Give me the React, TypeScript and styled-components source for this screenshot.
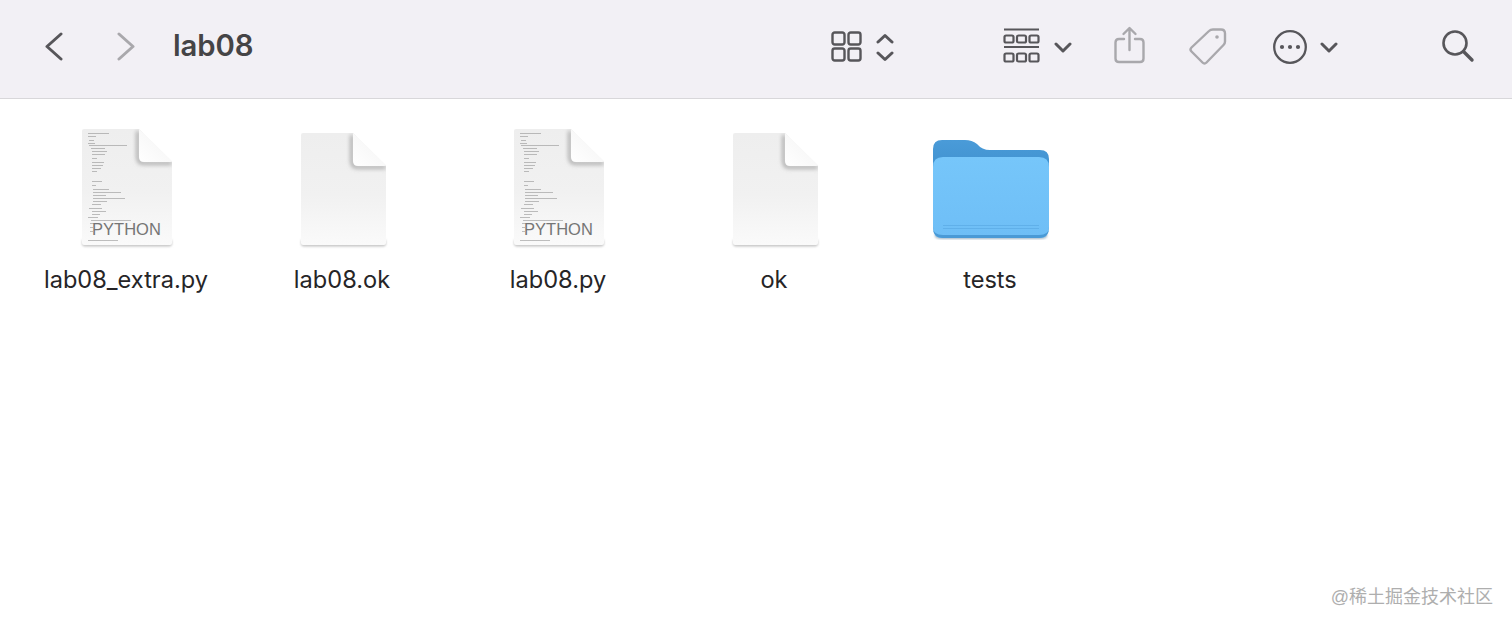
import React from "react";
import styled, { createGlobalStyle } from "styled-components";

const GlobalStyle = createGlobalStyle`
  html, body {
    margin: 0;
    padding: 0;
    background: #fff;
  }
  body {
    font-family: Inter, "Noto Sans", "Liberation Sans", sans-serif;
  }
`;

const Window = styled.div`
  position: relative;
  width: 1512px;
  height: 626px;
  overflow: hidden;
  background: #fff;
`;

const Toolbar = styled.header`
  display: flex;
  align-items: flex-start;
  box-sizing: border-box;
  height: 99px;
  padding-left: 45px;
  background: #f2f0f5;
  border-bottom: 1px solid #d8d7da;
`;

const Tool = styled.svg<{ $left: number; $top: number }>`
  flex: none;
  display: block;
  margin-left: ${(p) => p.$left}px;
  margin-top: ${(p) => p.$top}px;
  fill: none;
  stroke-linecap: round;
  stroke-linejoin: round;
`;

const Title = styled.h1`
  flex: none;
  width: 80px;
  margin: 27px 0 0 38px;
  font-size: 29.3px;
  line-height: 38px;
  font-weight: 600;
  letter-spacing: -0.1px;
  color: #454446;
`;

const Files = styled.main`
  display: grid;
  grid-template-columns: repeat(5, 216px);
  padding: 30px 0 0 18px;
`;

const File = styled.div`
  display: flex;
  flex-direction: column;
  align-items: center;
`;

const IconSlot = styled.div`
  display: flex;
  align-items: flex-end;
  justify-content: center;
  height: 120px;
`;

const DocSvg = styled.svg<{ $shift: number }>`
  display: block;
  margin-left: ${(p) => p.$shift}px;
`;

const FolderSvg = styled.svg`
  display: block;
  margin: 0 0 6px 2px;
`;

const Label = styled.span`
  margin-top: 17px;
  font-size: 23.6px;
  line-height: 28px;
  color: #262527;
  white-space: nowrap;
`;

const Watermark = styled.div`
  position: absolute;
  right: 19px;
  bottom: 17px;
  font-family: "Liberation Sans", "Noto Sans CJK SC", sans-serif;
  font-size: 18px;
  line-height: 24px;
  color: #aeaeae;
  white-space: nowrap;
`;

const DARK = "#57565a";
const MUTED = "#a9a8ac";

// the tiny code lines on the python thumbnail: [x, y, w]
const codeLines: [number, number, number][] = [
  [6, 4, 21], [6, 7, 8], [7, 11, 5], [6, 14, 7], [7, 16, 38], [9, 19, 14], [10, 22, 15], [10, 25, 13],
  [10, 29, 5], [10, 33, 12], [10, 36, 11], [10, 39, 9], [10, 42, 5],
  [10, 52, 10], [10, 56, 4], [11, 60, 16], [11, 63, 28], [11, 66, 13], [11, 69, 32], [11, 72, 14], [10, 75, 9],
  [7, 79, 13], [10, 82, 14], [10, 85, 8], [6, 88, 10], [9, 91, 40],
  [8, 94, 4], [8, 98, 3], [8, 102, 3], [6, 111, 30],
];

const DocIcon = ({ w, h, python, shift = 0 }: { w: number; h: number; python?: boolean; shift?: number }) => {
  const id = python ? "py" : `doc${w}`;
  const foldX = w - 33;
  const foldY = 33;
  return (
    <DocSvg $shift={shift} width={w + 6} height={h + 5} viewBox={`-3 -1 ${w + 6} ${h + 5}`}>
      <defs>
        <linearGradient id={`${id}-page`} x1="0" y1="0" x2="0" y2="1">
          <stop offset="0" stopColor="#eeeeee" />
          <stop offset="0.55" stopColor="#f1f1f1" />
          <stop offset="1" stopColor="#fafafa" />
        </linearGradient>
        <linearGradient id={`${id}-fold`} x1="0" y1="1" x2="1" y2="0">
          <stop offset="0" stopColor="#ffffff" />
          <stop offset="0.55" stopColor="#f8f8f8" />
          <stop offset="1" stopColor="#dedede" />
        </linearGradient>
        <filter id={`${id}-soft`} x="-50%" y="-50%" width="200%" height="200%">
          <feGaussianBlur stdDeviation="2.2" />
        </filter>
        <filter id={`${id}-under`} x="-10%" y="-50%" width="120%" height="200%">
          <feGaussianBlur stdDeviation="0.9" />
        </filter>
        <clipPath id={`${id}-clip`}>
          <path d={`M0 0 H${foldX} L${w} ${foldY} V${h} H0Z`} />
        </clipPath>
      </defs>
      <rect x="0" y={h - 6} width={w} height={7.5} rx="3" fill="#c4c4c4" filter={`url(#${id}-under)`} />
      <path
        d={`M2 0 H${foldX} L${w} ${foldY} V${h - 2} Q${w} ${h} ${w - 2} ${h} H2 Q0 ${h} 0 ${h - 2} V2 Q0 0 2 0Z`}
        fill={`url(#${id}-page)`}
      />
      {python &&
        codeLines.map(([x, y, lineW]) => (
          <rect key={`${x}-${y}`} x={x} y={y} width={lineW} height={0.9} fill="#8a8a8a" opacity={0.6} />
        ))}
      {python && (
        <text x={w / 2 - 0.5} y={h - 10} textAnchor="middle" fontFamily="Liberation Sans, sans-serif" fontSize="16.5" fill="#757575">
          PYTHON
        </text>
      )}
      <g clipPath={`url(#${id}-clip)`}>
        <path
          d={`M${foldX - 1} 2 V${foldY - 5} Q${foldX - 1} ${foldY + 1} ${foldX + 4} ${foldY + 1} H${w}`}
          fill="none"
          stroke="#9c9c9c"
          strokeWidth="3"
          filter={`url(#${id}-soft)`}
        />
      </g>
      <path
        d={`M${foldX} 0 L${w} ${foldY - 1} Q${w} ${foldY} ${w - 2} ${foldY} H${foldX + 5} Q${foldX} ${foldY} ${foldX} ${foldY - 5}Z`}
        fill={`url(#${id}-fold)`}
      />
    </DocSvg>
  );
};

const FolderIcon = () => (
  <FolderSvg width="118" height="104" viewBox="0 0 118 104">
    <defs>
      <linearGradient id="folder-front" x1="0" y1="0" x2="0" y2="1">
        <stop offset="0" stopColor="#76c6fa" />
        <stop offset="1" stopColor="#6ebef6" />
      </linearGradient>
      <linearGradient id="folder-back" x1="0" y1="0" x2="0" y2="1">
        <stop offset="0" stopColor="#4a9bd8" />
        <stop offset="1" stopColor="#3a8ccb" />
      </linearGradient>
      <filter id="folder-shadow" x="-5%" y="-5%" width="110%" height="115%">
        <feGaussianBlur stdDeviation="1" />
      </filter>
    </defs>
    <path d="M3 90 H115 V97 Q115 100 107 100 H11 Q3 100 3 97Z" fill="#9fb4c4" filter="url(#folder-shadow)" />
    <path
      d="M1 40 V10 Q1 1 10 1 H33 Q40 1 45 5 Q50 11 58 11 H108 Q117 11 117 20 V50 H1Z"
      fill="url(#folder-back)"
    />
    <path
      d="M1 28 Q1 18 11 18 H107 Q117 18 117 28 V89 Q117 99 107 99 H11 Q1 99 1 89Z"
      fill="url(#folder-front)"
    />
    <path d="M1 88 Q1 99 11 99 H107 Q117 99 117 88 Q117 96 107 96 H11 Q1 96 1 88Z" fill="#4a9ad6" />
    <path d="M11 86.5 H107 M11 89.5 H107" stroke="#5dacE6" strokeWidth="0.8" />
  </FolderSvg>
);

const files = [
  { name: "lab08_extra.py", kind: "python", shift: 2 },
  { name: "lab08.ok", kind: "blank", shift: 2 },
  { name: "lab08.py", kind: "python", shift: 2 },
  { name: "ok", kind: "blank", shift: 2 },
  { name: "tests", kind: "folder", shift: 0 },
];

export default function App() {
  return (
    <Window>
      <GlobalStyle />
      <Toolbar>
        <Tool $left={0} $top={32} width="18" height="29" viewBox="0 0 18 29" stroke={DARK} strokeWidth="3">
          <path d="M16 2 L2 14.5 L16 27" />
        </Tool>
        <Tool $left={54} $top={32} width="18" height="29" viewBox="0 0 18 29" stroke={MUTED} strokeWidth="3">
          <path d="M2 2 L16 14.5 L2 27" />
        </Tool>
        <Title>lab08</Title>
        <Tool $left={578} $top={31} width="31" height="32" viewBox="0 0 31 32" stroke={DARK} strokeWidth="2.4">
          <rect x="1.5" y="1.5" width="12" height="12" rx="2.2" />
          <rect x="17.5" y="1.5" width="12" height="12" rx="2.2" />
          <rect x="1.5" y="17.5" width="12" height="12" rx="2.2" />
          <rect x="17.5" y="17.5" width="12" height="12" rx="2.2" />
        </Tool>
        <Tool $left={14} $top={33} width="18" height="29" viewBox="0 0 18 29" stroke={DARK} strokeWidth="3">
          <path d="M2 9 L9 2.5 L16 9 M2 20 L9 26.5 L16 20" />
        </Tool>
        <Tool $left={109} $top={28} width="37" height="36" viewBox="0 0 37 36" stroke={DARK} strokeWidth="2.2">
          <path d="M1 1.5 H36 M1 19 H36" strokeWidth="2" strokeLinecap="butt" />
          <rect x="1.5" y="7.5" width="9" height="7" rx="1.6" />
          <rect x="14" y="7.5" width="9" height="7" rx="1.6" />
          <rect x="26.5" y="7.5" width="9" height="7" rx="1.6" />
          <rect x="1.5" y="25.5" width="9" height="8" rx="1.6" />
          <rect x="14" y="25.5" width="9" height="8" rx="1.6" />
          <rect x="26.5" y="25.5" width="9" height="8" rx="1.6" />
        </Tool>
        <Tool $left={14} $top={41} width="18" height="13" viewBox="0 0 18 13" stroke={DARK} strokeWidth="3">
          <path d="M2 3 L9 10 L16 3" />
        </Tool>
        <Tool $left={42} $top={26} width="31" height="38" viewBox="0 0 31 38" stroke={MUTED} strokeWidth="2.4">
          <path d="M10 13 H5 Q1.5 13 1.5 16.5 V32.5 Q1.5 36 5 36 H26 Q29.5 36 29.5 32.5 V16.5 Q29.5 13 26 13 H21" />
          <path d="M15.5 24 V2.5 M9.5 8 L15.5 2 L21.5 8" />
        </Tool>
        <Tool $left={43} $top={27} width="40" height="40" viewBox="0 0 40 40" stroke={MUTED} strokeWidth="2.4">
          <path d="M25 2.5 H33 Q37 2.5 37 6.5 V14.5 Q37 16.5 35.5 18 L18.5 35.5 Q16.5 37.5 14.5 35.5 L3.5 24.5 Q1.5 22.5 3.5 20.5 L21 4 Q22.5 2.5 25 2.5Z" />
          <circle cx="29" cy="10" r="1.8" fill={MUTED} stroke="none" />
        </Tool>
        <Tool $left={44} $top={29} width="36" height="36" viewBox="0 0 36 36" stroke={DARK} strokeWidth="2.3">
          <circle cx="18" cy="18" r="15.8" />
          <circle cx="10" cy="18" r="2.1" fill={DARK} stroke="none" />
          <circle cx="18" cy="18" r="2.1" fill={DARK} stroke="none" />
          <circle cx="26" cy="18" r="2.1" fill={DARK} stroke="none" />
        </Tool>
        <Tool $left={12} $top={41} width="18" height="13" viewBox="0 0 18 13" stroke={DARK} strokeWidth="3">
          <path d="M2 3 L9 10 L16 3" />
        </Tool>
        <Tool $left={103} $top={29} width="34" height="34" viewBox="0 0 34 34" stroke={DARK} strokeWidth="2.6">
          <circle cx="14" cy="14" r="11.5" />
          <path d="M22.5 22.5 L31 31" strokeWidth="3.4" />
        </Tool>
      </Toolbar>
      <Files>
        {files.map((file) => (
          <File key={file.name}>
            <IconSlot>
              {file.kind === "python" && <DocIcon w={90} h={116} python shift={file.shift} />}
              {file.kind === "blank" && <DocIcon w={85} h={112} shift={file.shift} />}
              {file.kind === "folder" && <FolderIcon />}
            </IconSlot>
            <Label>{file.name}</Label>
          </File>
        ))}
      </Files>
      <Watermark>@稀土掘金技术社区</Watermark>
    </Window>
  );
}
